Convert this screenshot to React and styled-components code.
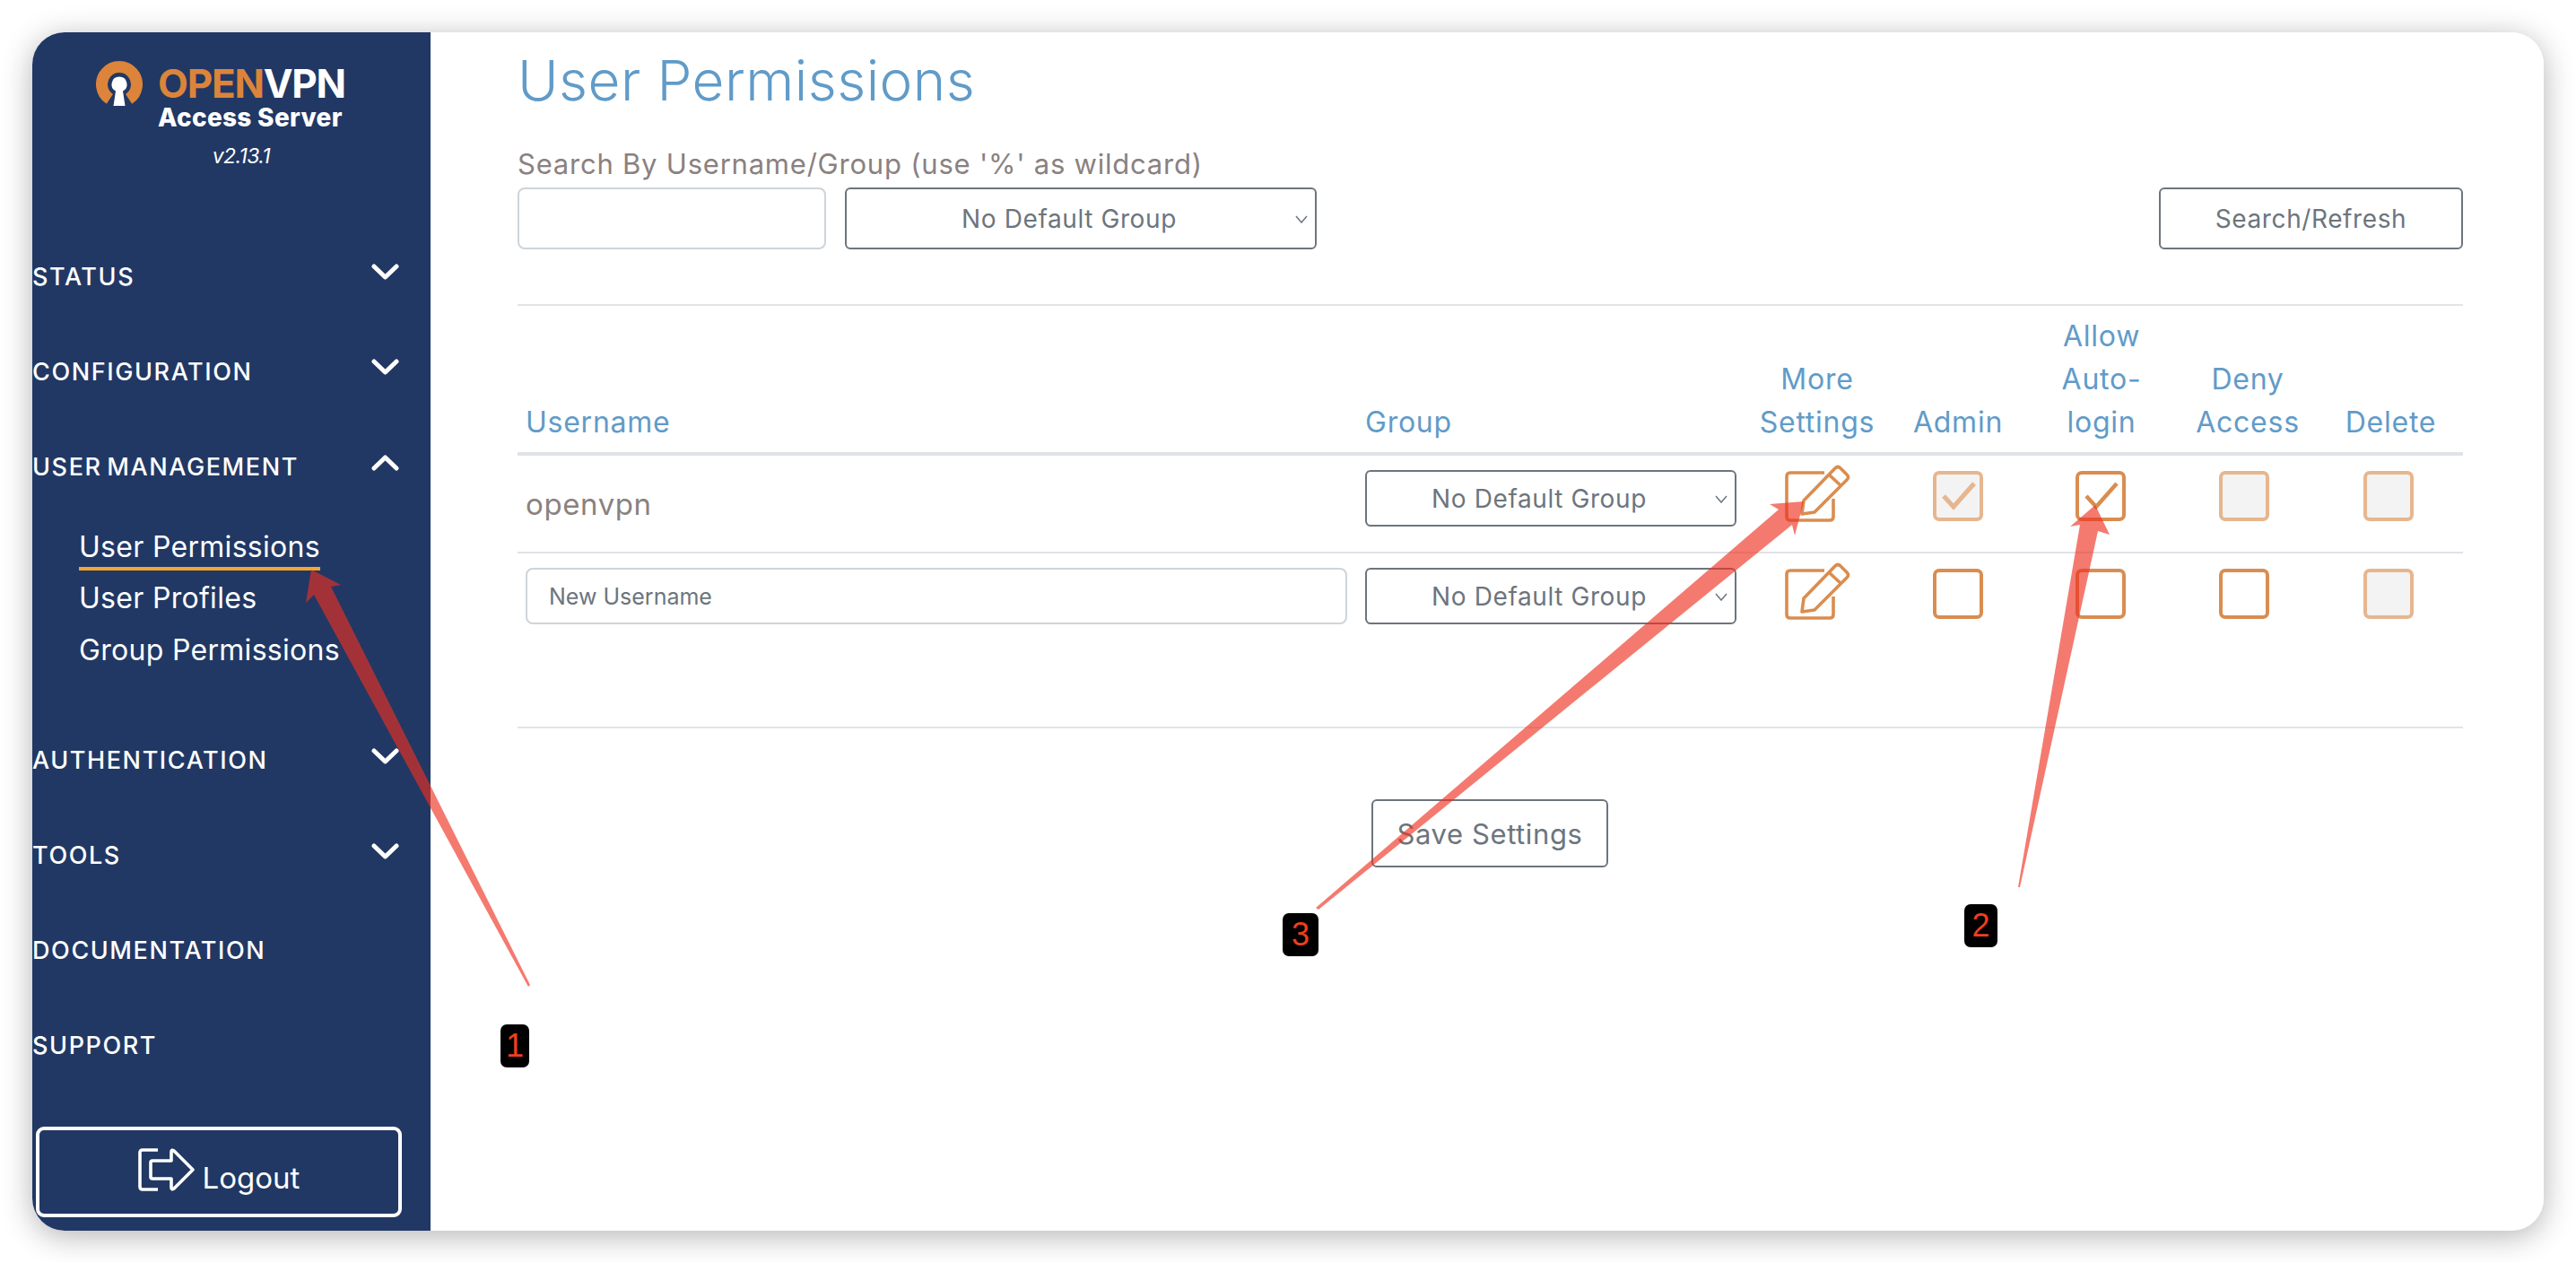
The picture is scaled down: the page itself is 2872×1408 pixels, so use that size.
import React from "react";
import styled, { createGlobalStyle } from "styled-components";

const Global = createGlobalStyle`
  html, body { margin: 0; padding: 0; background: #fff; }
  body { width: 2872px; height: 1408px; overflow: hidden; font-family: Inter, "Noto Sans", sans-serif; }
  * { box-sizing: border-box; }
`;

const Page = styled.div`
  position: relative;
  width: 2872px;
  height: 1408px;
  padding: 36px;
`;
const Window = styled.div`
  display: flex;
  height: 1336px;
  border-radius: 36px;
  overflow: hidden;
  background: #fff;
`;
const WindowShadow = styled.div`
  border-radius: 36px;
  box-shadow: 0 6px 34px rgba(0, 0, 0, 0.3);
`;
const Sidebar = styled.aside`
  width: 444px;
  flex: none;
  background: #213864;
  color: #fff;
  display: flex;
  flex-direction: column;
  padding-bottom: 15px;
`;
const Brand = styled.div`
  height: 219px;
  padding: 32px 0 0 71px;
  display: grid;
  grid-template-columns: 52px auto;
  grid-template-rows: 52px auto;
  column-gap: 17px;
  justify-content: start;
`;
const BrandMark = styled.svg`
  width: 52px;
  height: 52px;
`;
const BrandText = styled.div`
  height: 52px;
`;
const BrandName = styled.div`
  font-size: 44px;
  line-height: 50px;
  font-weight: 700;
  letter-spacing: -1.25px;
  white-space: nowrap;
  span { color: #dc843a; }
`;
const BrandSub = styled.div`
  font-size: 28px;
  line-height: 26px;
  font-weight: 800;
  letter-spacing: 0.3px;
  white-space: nowrap;
`;
const Version = styled.div`
  grid-column: 1 / 3;
  font-size: 23px;
  line-height: 28px;
  font-style: italic;
  letter-spacing: -0.6px;
  text-align: center;
  padding: 40px 0 0 46px;
`;
const NavItem = styled.div`
  height: 106px;
  display: flex;
  align-items: center;
  justify-content: space-between;
  padding-right: 35px;
  font-size: 27px;
  font-weight: 500;
  letter-spacing: 1.6px;
  word-spacing: -6px;
  white-space: pre;
`;
const Chevron = styled.svg`
  width: 31px;
  height: 19px;
  margin-bottom: 9px;
`;
const SubMenu = styled.div`
  padding: 8px 0 41px 52px;
`;
const SubItem = styled.div`
  height: 57.5px;
  display: flex;
  align-items: center;
`;
const SubLink = styled.span`
  display: inline-block;
  font-size: 32px;
  line-height: 38px;
  letter-spacing: 0.3px;
  padding: 7px 0 3px;
  white-space: nowrap;
  border-bottom: 4px solid ${(p) => (p.$active ? "#f4a533" : "transparent")};
`;
const Logout = styled.button`
  margin: auto 0 0 4px;
  width: 408px;
  height: 101px;
  background: transparent;
  border: 4px solid #fff;
  border-radius: 9px;
  color: #fff;
  display: flex;
  align-items: center;
  justify-content: center;
  gap: 8px;
  font-family: inherit;
  font-size: 33px;
  padding: 0;
  span { margin-top: 12px; }
`;
const LogoutIcon = styled.svg`
  width: 64px;
  height: 48px;
  margin-top: -6px;
`;
const Main = styled.main`
  flex: 1;
  padding: 14px 90px 0 97px;
`;
const Title = styled.h1`
  margin: 0;
  font-size: 62px;
  line-height: 80px;
  font-weight: 300;
  letter-spacing: 0.45px;
  color: #619bc8;
`;
const SearchLabel = styled.div`
  margin-top: 33px;
  font-size: 31px;
  line-height: 40px;
  letter-spacing: 0.78px;
  color: #8a8180;
  white-space: nowrap;
`;
const SearchBar = styled.div`
  display: flex;
  margin-top: 6px;
  gap: 21px;
  align-items: stretch;
  height: 69px;
`;
const TextBox = styled.input`
  width: ${(p) => p.$w}px;
  height: ${(p) => p.$h}px;
  border: 2px solid #ced4da;
  border-radius: 8px;
  padding: 0 24px;
  font-family: inherit;
  font-size: 25px;
  color: #6c757d;
  outline: none;
  background: #fff;
  &::placeholder { color: #6c757d; opacity: 1; }
`;
const SelectWrap = styled.div`
  position: relative;
  width: ${(p) => p.$w}px;
  height: ${(p) => p.$h}px;
`;
const Select = styled.select`
  appearance: none;
  width: 100%;
  height: 100%;
  border: 2px solid #6c757d;
  border-radius: 6px;
  background: #fff;
  color: #6c757d;
  font-family: inherit;
  font-size: 28px;
  letter-spacing: 0.6px;
  text-align: center;
  text-align-last: center;
  padding: 0 26px 0 0;
`;
const SelectCaret = styled.svg`
  position: absolute;
  right: 10px;
  top: 50%;
  width: 14px;
  height: 9px;
  margin-top: -4px;
  pointer-events: none;
`;
const OutlineButton = styled.button`
  width: ${(p) => p.$w}px;
  height: ${(p) => p.$h}px;
  border: 2px solid #6c757d;
  border-radius: 6px;
  background: transparent;
  color: #6c757d;
  font-family: inherit;
  font-size: ${(p) => p.$size}px;
  letter-spacing: 0.6px;
  padding: 0;
`;
const SearchButton = styled(OutlineButton)`
  margin-left: auto;
`;
const Rule = styled.hr`
  margin: ${(p) => p.$top}px 0 0;
  border: 0;
  height: 2px;
  background: #e1e4e8;
`;
const Row = styled.div`
  display: grid;
  grid-template-columns: 936px 432px 162px 152px 168px 158px 161px;
`;
const HeadRow = styled(Row)`
  align-items: end;
  margin-top: 10px;
  padding-bottom: 9px;
  border-bottom: 4px solid #dfe3e7;
`;
const HeadCell = styled.div`
  font-size: 32px;
  line-height: 48px;
  letter-spacing: 0.75px;
  color: #619bc8;
  text-align: ${(p) => (p.$left ? "left" : "center")};
  padding-left: ${(p) => (p.$left ? 9 : 0)}px;
  white-space: pre-line;
`;
const BodyRow = styled(Row)`
  align-items: center;
  grid-auto-rows: 63px;
  height: ${(p) => p.$h}px;
  padding-top: 16px;
  border-bottom: ${(p) => (p.$line ? "2px solid #dfe3e7" : "0")};
`;
const UserName = styled.div`
  padding: 13px 0 0 9px;
  font-size: 33px;
  letter-spacing: 0.6px;
  color: #8a8180;
`;
const LeftCell = styled.div`
  padding-left: 9px;
`;
const CenterCell = styled.div`
  display: flex;
  justify-content: center;
  padding-right: ${(p) => p.$shift || 0}px;
`;
const PencilIcon = styled.svg`
  width: 73px;
  height: 65px;
  margin-bottom: 10px;
`;
const Check = styled.div`
  width: 56px;
  height: 56px;
  margin-bottom: 5px;
  border-radius: 7px;
  border: 4px solid ${(p) => (p.$muted ? "#e6b68f" : "#d98d50")};
  background: ${(p) => (p.$muted ? "#f3f3f3" : "#fff")};
  display: flex;
`;
const CheckMark = styled.svg`
  width: 48px;
  height: 48px;
`;
const SaveRow = styled.div`
  display: flex;
  margin-top: 79px;
  padding-left: 952px;
`;
const Notes = styled.svg`
  position: absolute;
  left: 0;
  top: 0;
  width: 2872px;
  height: 1408px;
  pointer-events: none;
`;
const Badge = styled.div`
  position: absolute;
  left: ${(p) => p.$x}px;
  top: ${(p) => p.$y}px;
  width: ${(p) => p.$w}px;
  height: 48px;
  border-radius: 7px;
  background: #000;
  color: #ee3e20;
  font-family: "Liberation Sans", Arial, sans-serif;
  font-size: 36px;
  line-height: 48px;
  text-align: center;
`;

const ChevronIcon = ({ up }) => (
  <Chevron viewBox="0 0 31 19">
    <path d={up ? "M3 16 15.5 4 28 16" : "M3 3 15.5 15 28 3"} fill="none" stroke="#fff" strokeWidth="5" strokeLinecap="round" strokeLinejoin="round" />
  </Chevron>
);

const GroupSelect = ({ w, h }) => (
  <SelectWrap $w={w} $h={h}>
    <Select defaultValue="none">
      <option value="none">No Default Group</option>
    </Select>
    <SelectCaret viewBox="0 0 14 9">
      <path d="M1 1 7 8 13 1" fill="none" stroke="#6c757d" strokeWidth="1.5" />
    </SelectCaret>
  </SelectWrap>
);

const Pencil = () => (
  <PencilIcon viewBox="0 0 73 65">
    <g fill="none" stroke="#d98d50" strokeWidth="3.6" strokeLinejoin="round" strokeLinecap="butt">
      <path d="M44 9H6Q2 9 2 13V58Q2 62 6 62H50Q54 62 54 58V38" />
      <path d="M19 55 21 40 56 4Q59 1 62 4L69 11Q72 14 69 17L33 53Z" />
      <path d="M49 11 63 24" />
    </g>
  </PencilIcon>
);

const Box = ({ muted, checked, shift }) => (
  <CenterCell $shift={shift}>
    <Check $muted={muted}>
      {checked && (
        <CheckMark viewBox="0 0 48 48">
          <path d="M8 24 19 36 42 10" fill="none" stroke={muted ? "#e6b68f" : "#d98d50"} strokeWidth={muted ? 5 : 4.5} />
        </CheckMark>
      )}
    </Check>
  </CenterCell>
);

const nav = ["STATUS", "CONFIGURATION"];
const navAfter = ["AUTHENTICATION", "TOOLS"];
const ArrowFill = "rgba(238,47,31,0.64)";

export default function App() {
  return (
    <Page>
      <Global />
      <WindowShadow>
        <Window>
          <Sidebar>
            <Brand>
              <BrandMark viewBox="0 0 52 52">
                <path d="M15.4 42.4A19.5 19.5 0 1 1 36.6 42.4" fill="none" stroke="#dc843a" strokeWidth="13" />
                <path d="M26 17.5a8.5 8.5 0 0 1 4 16L32.5 50H19.5L22 33.5a8.5 8.5 0 0 1 4-16Z" fill="#fff" />
              </BrandMark>
              <BrandText>
                <BrandName><span>OPEN</span>VPN</BrandName>
                <BrandSub>Access Server</BrandSub>
              </BrandText>
              <Version>v2.13.1</Version>
            </Brand>
            {nav.map((n) => (
              <NavItem key={n}>{n}<ChevronIcon /></NavItem>
            ))}
            <NavItem>USER  MANAGEMENT<ChevronIcon up /></NavItem>
            <SubMenu>
              <SubItem><SubLink $active>User Permissions</SubLink></SubItem>
              <SubItem><SubLink>User Profiles</SubLink></SubItem>
              <SubItem><SubLink>Group Permissions</SubLink></SubItem>
            </SubMenu>
            {navAfter.map((n) => (
              <NavItem key={n}>{n}<ChevronIcon /></NavItem>
            ))}
            <NavItem>DOCUMENTATION</NavItem>
            <NavItem>SUPPORT</NavItem>
            <Logout>
              <LogoutIcon viewBox="0 0 64 48">
                <g fill="none" stroke="#fff" strokeWidth="3.6" strokeLinejoin="round">
                  <path d="M22 2H5Q2 2 2 5V43Q2 46 5 46H22" />
                  <path d="M16 14H37V4Q37 1 40 3L61 24 40 45Q37 47 37 44V34H16Q14 34 14 32V16Q14 14 16 14Z" />
                </g>
              </LogoutIcon>
              <span>Logout</span>
            </Logout>
          </Sidebar>
          <Main>
            <Title>User Permissions</Title>
            <SearchLabel>Search By Username/Group (use '%' as wildcard)</SearchLabel>
            <SearchBar>
              <TextBox $w={344} $h={69} />
              <GroupSelect w={526} h={69} />
              <SearchButton $w={339} $h={69} $size={28}>Search/Refresh</SearchButton>
            </SearchBar>
            <Rule $top={61} />
            <HeadRow>
              <HeadCell $left>Username</HeadCell>
              <HeadCell $left>Group</HeadCell>
              <HeadCell>{"More\nSettings"}</HeadCell>
              <HeadCell>Admin</HeadCell>
              <HeadCell>{"Allow\nAuto-\nlogin"}</HeadCell>
              <HeadCell>{"Deny\nAccess"}</HeadCell>
              <HeadCell>Delete</HeadCell>
            </HeadRow>
            <BodyRow $h={109} $line>
              <UserName>openvpn</UserName>
              <LeftCell><GroupSelect w={414} h={63} /></LeftCell>
              <CenterCell><Pencil /></CenterCell>
              <Box muted checked />
              <Box checked shift={2} />
              <Box muted shift={8} />
              <Box muted shift={6} />
            </BodyRow>
            <BodyRow $h={110}>
              <LeftCell><TextBox $w={916} $h={63} placeholder="New Username" /></LeftCell>
              <LeftCell><GroupSelect w={414} h={63} /></LeftCell>
              <CenterCell><Pencil /></CenterCell>
              <Box />
              <Box shift={2} />
              <Box shift={8} />
              <Box muted shift={6} />
            </BodyRow>
            <Rule $top={83} />
            <SaveRow>
              <OutlineButton $w={264} $h={76} $size={31}>Save Settings</OutlineButton>
            </SaveRow>
          </Main>
        </Window>
      </WindowShadow>
      <Notes viewBox="0 0 2872 1408">
        <polygon fill={ArrowFill} points="591,1098 589,1100 350,663 341,672 347,635 380,652 369,654" />
        <polygon fill={ArrowFill} points="2252,989 2250,989 2319,585 2308,587 2336,563 2352,596 2339,592" />
        <polygon fill={ArrowFill} points="1470,1014 1467,1012 1983,568 1973,562 2011,559 2001,597 1998,585" />
      </Notes>
      <Badge $x={558} $y={1142} $w={32}>1</Badge>
      <Badge $x={2190} $y={1008} $w={37}>2</Badge>
      <Badge $x={1430} $y={1018} $w={40}>3</Badge>
    </Page>
  );
}
